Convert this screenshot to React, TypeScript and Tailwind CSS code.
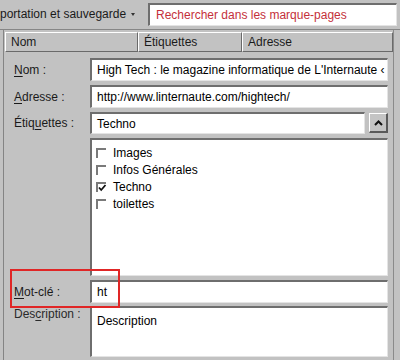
import React from "react";

const sunken =
  "bg-white border-t-2 border-l-2 border-b border-r border-t-[#6e6e6e] border-l-[#6e6e6e] border-b-[#e4e4e4] border-r-[#e4e4e4]";

function Check({ checked }: { checked?: boolean }) {
  return (
    <span className="relative w-[10px] h-[10px] border-t-2 border-l-2 border-[#7a7a7a] bg-white shrink-0">
      {checked && (
        <svg className="absolute left-[0px] top-[0px]" width="9" height="8" viewBox="0 0 9 8">
          <path d="M1 3.5 L3.2 6 L7.5 1" stroke="#111" strokeWidth="1.8" fill="none" />
        </svg>
      )}
    </span>
  );
}

function Label({ children }: { children: React.ReactNode }) {
  return <div className="w-[76px] shrink-0 text-[12px] text-[#1a1a1a]">{children}</div>;
}

const headCell =
  "h-[20px] border-t border-l border-b border-r border-t-white border-l-white border-b-[#6a6a6a] border-r-[#6a6a6a] text-[12px] text-[#1a1a1a] pl-[5px] leading-[18px]";

export default function App() {
  return (
    <div
      className="w-[400px] h-[360px] bg-[#c2c2c2] overflow-hidden relative"
      style={{ fontFamily: '"Liberation Sans", Arial, sans-serif' }}
    >
      {/* toolbar */}
      <div className="h-[29px] flex items-center">
        <div className="flex items-center text-[12px] text-[#1a1a1a] w-[148px] -mt-[1px]">
          <span>portation et sauvegarde</span>
          <svg className="ml-[5px] mt-[1px]" width="4" height="3" viewBox="0 0 4 3">
            <path d="M0 0 H4 L2 3 Z" fill="#333" />
          </svg>
        </div>
        <div className={`${sunken} w-[249px] h-[23px] flex items-center pl-[6px] text-[12px] text-[#c4303a]`}>
          Rechercher dans les marque-pages
        </div>
      </div>
      <div className="h-px bg-[#868686]" />

      {/* panel */}
      <div className="ml-[3px] w-[391px] h-[331px] border-l border-r border-l-[#848484] border-r-[#8a8a8a] relative">
        {/* header */}
        <div className="flex pl-px pt-[2px] h-[23px]">
          <div className={`w-[133px] ${headCell}`}>Nom</div>
          <div className={`w-[104px] ${headCell}`}>Étiquettes</div>
          <div className={`flex-1 ${headCell}`}>Adresse</div>
        </div>

        {/* form */}
        <div className="pl-[10px] pt-[5px] flex flex-col">
          <div className="flex items-center h-[23px]">
            <Label>
              <span className="underline underline-offset-2">N</span>om :
            </Label>
            <div className={`${sunken} w-[298px] h-[23px] flex items-center pl-[5px] text-[12px] text-black overflow-hidden whitespace-nowrap`}>
              High Tech : le magazine informatique de L'Internaute ‹
            </div>
          </div>

          <div className="flex items-center h-[23px] mt-[4px]">
            <Label>
              <span className="underline underline-offset-2">A</span>dresse :
            </Label>
            <div className={`${sunken} w-[298px] h-[23px] flex items-center pl-[5px] text-[12px] text-black`}>
              http://www.linternaute.com/hightech/
            </div>
          </div>

          <div className="flex items-center h-[22px] mt-[4px]">
            <Label>
              Étiq<span className="underline underline-offset-2">u</span>ettes :
            </Label>
            <div className={`${sunken} w-[275px] h-[22px] flex items-center pl-[5px] text-[12px] text-black`}>
              Techno
            </div>
            <div className="ml-[4px] w-[19px] h-[20px] border-t border-l border-b-2 border-r-2 border-t-white border-l-white border-b-[#5a5a5a] border-r-[#5a5a5a] bg-[#c4c4c4] flex items-center justify-center">
              <svg width="9" height="6" viewBox="0 0 9 6">
                <path d="M1 5 L4.5 1.5 L8 5" stroke="#111" strokeWidth="2" fill="none" />
              </svg>
            </div>
          </div>

          <div className="flex mt-[4px]">
            <div className="w-[76px] shrink-0" />
            <div className={`${sunken} w-[298px] h-[138px] pl-[4px] pt-[4px] flex flex-col text-[12px] text-black`}>
              {[
                { t: "Images" },
                { t: "Infos Générales" },
                { t: "Techno", c: true },
                { t: "toilettes" },
              ].map((it) => (
                <div key={it.t} className="flex items-center h-[17px] gap-[7px]">
                  <Check checked={it.c} />
                  <span>{it.t}</span>
                </div>
              ))}
            </div>
          </div>

          <div className="flex items-center h-[23px] mt-[4px]">
            <Label>
              <span className="underline underline-offset-2">M</span>ot-clé :
            </Label>
            <div className={`${sunken} w-[298px] h-[23px] flex items-center pl-[5px] text-[12px] text-black`}>
              ht
            </div>
          </div>

          <div className="flex mt-[3px]">
            <div className="w-[76px] shrink-0 text-[12px] text-[#2a2a2a] -mt-[1px]">
              Des<span className="underline underline-offset-2">c</span>ription :
            </div>
            <div className={`${sunken} w-[298px] h-[51px] pl-[5px] pt-[4px] text-[12px] text-black`}>
              Description
            </div>
          </div>
        </div>
      </div>

      {/* red highlight */}
      <div className="absolute left-[10px] top-[269px] w-[110px] h-[39px] border-2 border-[#e02626]" />
    </div>
  );
}
